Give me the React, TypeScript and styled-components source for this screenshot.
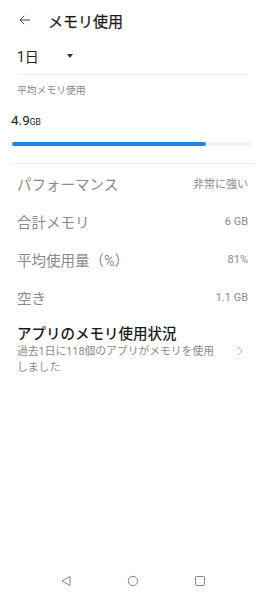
import React from "react";
import styled, { createGlobalStyle } from "styled-components";

const Global = createGlobalStyle`
  html, body {
    margin: 0;
    padding: 0;
    background: #fff;
  }
  body {
    font-family: Roboto, "Noto Sans CJK JP", sans-serif;
  }
`;

const stats = [
  { label: "パフォーマンス", value: "非常に強い" },
  { label: "合計メモリ", value: "6 GB" },
  { label: "平均使用量（%）", value: "81%" },
  { label: "空き", value: "1.1 GB" },
];

const App = () => {
  return (
    <Page>
      <Global />
      <Header>
        <BackIcon viewBox="0 0 14 12">
          <path d="M13 6H1.5M6 1L1 6l5 5" fill="none" stroke="#333" strokeWidth="1.1" />
        </BackIcon>
        <Title>メモリ使用</Title>
      </Header>

      <PeriodRow>
        <Period>1日</Period>
        <Caret viewBox="0 0 6 4">
          <path d="M0 0h6L3 4z" fill="#333" />
        </Caret>
      </PeriodRow>
      <Divider $inset />

      <Label>平均メモリ使用</Label>
      <Amount>
        4.9<Unit>GB</Unit>
      </Amount>
      <Track>
        <Fill style={{ width: "81%" }} />
      </Track>
      <Divider $gap />

      {stats.map((s) => (
        <StatRow key={s.label}>
          <StatLabel>{s.label}</StatLabel>
          <StatValue>{s.value}</StatValue>
        </StatRow>
      ))}

      <AppsRow>
        <AppsText>
          <AppsTitle>アプリのメモリ使用状況</AppsTitle>
          <AppsSub>
            過去1日に118個のアプリがメモリを使用
            <br />
            しました
          </AppsSub>
        </AppsText>
        <Chevron viewBox="0 0 6 10">
          <path d="M1 1l4 4-4 4" fill="none" stroke="#aaa" strokeWidth="0.9" />
        </Chevron>
      </AppsRow>

      <Spacer />

      <NavBar>
        <NavIcon viewBox="0 0 12 12">
          <path d="M10 1.5v9L2 6z" fill="none" stroke="#777" strokeWidth="0.9" strokeLinejoin="round" />
        </NavIcon>
        <NavIcon viewBox="0 0 12 12">
          <circle cx="6" cy="6" r="4.7" fill="none" stroke="#777" strokeWidth="0.9" />
        </NavIcon>
        <NavIcon viewBox="0 0 12 12">
          <rect x="1.5" y="1.5" width="9" height="9" rx="1" fill="none" stroke="#777" strokeWidth="0.9" />
        </NavIcon>
      </NavBar>
    </Page>
  );
};

const Page = styled.div`
  width: 265px;
  height: 596px;
  display: flex;
  flex-direction: column;
  overflow: hidden;
`;

const Header = styled.div`
  height: 40px;
  display: flex;
  align-items: center;
  padding-left: 19px;
`;

const BackIcon = styled.svg`
  width: 12px;
  height: 10px;
  margin-right: 17px;
`;

const Title = styled.div`
  font-size: 15px;
  font-weight: 400;
  color: #1a1a1a;
  -webkit-text-stroke: 0.25px #1a1a1a;
`;

const PeriodRow = styled.div`
  height: 32px;
  display: flex;
  align-items: center;
  padding-left: 17px;
`;

const Period = styled.span`
  font-size: 14px;
  color: #222;
  width: 50px;
`;

const Caret = styled.svg`
  width: 6px;
  height: 4px;
`;

const Divider = styled.div<{ $inset?: boolean; $gap?: boolean }>`
  height: 1px;
  background: #f0f0f0;
  margin: ${(p) => (p.$inset ? "0 17px" : "0 10px")};
  margin-top: ${(p) => (p.$gap ? "17px" : "2px")};
`;

const Label = styled.div`
  font-size: 9.8px;
  color: #888;
  padding: 9px 17px 0;
  line-height: 14px;
`;

const Amount = styled.div`
  font-size: 13.5px;
  color: #222;
  padding: 14px 11px 0;
  line-height: 16px;
`;

const Unit = styled.span`
  font-size: 8.5px;
`;

const Track = styled.div`
  margin: 12px 13px 0 12px;
  height: 4px;
  border-radius: 2px;
  background: #f5f5f5;
`;

const Fill = styled.div`
  height: 100%;
  border-radius: 2px;
  background: #1e86e3;
`;

const StatRow = styled.div`
  height: 38px;
  display: flex;
  align-items: center;
  justify-content: space-between;
  padding: 0 17px;
  &:first-of-type {
    margin-top: -1px;
  }
`;

const StatLabel = styled.span`
  font-size: 14.5px;
  color: #8a8a8a;
`;

const StatValue = styled.span`
  font-size: 11px;
  color: #8a8a8a;
`;

const AppsRow = styled.div`
  display: flex;
  align-items: center;
  padding: 10px 17px 0;
`;

const AppsText = styled.div`
  flex: 1;
`;

const AppsTitle = styled.div`
  font-size: 14.5px;
  font-weight: 500;
  color: #1a1a1a;
  line-height: 18px;
`;

const AppsSub = styled.div`
  font-size: 10.8px;
  color: #8a8a8a;
  line-height: 16px;
`;

const Chevron = styled.svg`
  width: 6px;
  height: 10px;
  margin-right: 5px;
`;

const Spacer = styled.div`
  flex: 1;
`;

const NavBar = styled.div`
  height: 30px;
  display: flex;
  justify-content: center;
  align-items: center;
  gap: 55px;
`;

const NavIcon = styled.svg`
  width: 12px;
  height: 12px;
`;

export default App;
